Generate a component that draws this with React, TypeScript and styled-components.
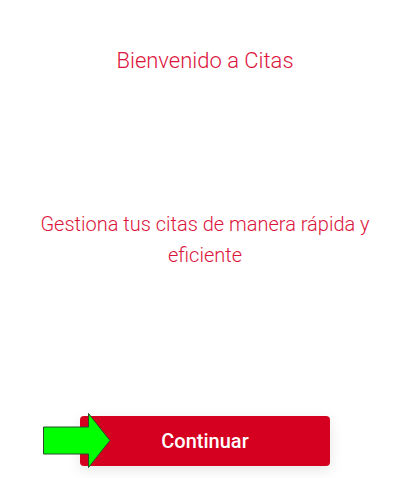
import React from "react";
import styled, { createGlobalStyle } from "styled-components";

const Global = createGlobalStyle`
  html, body { margin: 0; padding: 0; background: #ffffff; }
  body { font-family: Roboto, "Noto Sans", sans-serif; }
`;

const Screen = styled.div`
  box-sizing: border-box;
  height: 478px;
  padding: 47px 0 12px 8px;
  display: flex;
  flex-direction: column;
  align-items: center;
`;

const Title = styled.h1`
  margin: 0;
  font-size: 22px;
  font-weight: 300;
  line-height: 28px;
  color: #dc143c;
  text-align: center;
`;

const Middle = styled.div`
  flex: 1;
  display: flex;
  align-items: center;
  justify-content: center;
  padding-bottom: 12px;
`;

const Subtitle = styled.p`
  margin: 0;
  width: 360px;
  font-size: 20px;
  font-weight: 300;
  line-height: 31px;
  color: #dc143c;
  text-align: center;
`;

const ButtonWrap = styled.div`
  position: relative;
`;

const Button = styled.button`
  width: 250px;
  height: 50px;
  border: none;
  border-radius: 4px;
  background: #d50020;
  color: #ffffff;
  font-family: Roboto, "Noto Sans", sans-serif;
  font-size: 20px;
  font-weight: 500;
  box-shadow: 0 4px 14px rgba(0, 0, 0, 0.1);
  cursor: pointer;
`;

const Arrow = styled.svg`
  position: absolute;
  left: -37px;
  top: -3px;
  overflow: visible;
`;

export default function App() {
  return (
    <>
      <Global />
      <Screen>
        <Title>Bienvenido a Citas</Title>
        <Middle>
          <Subtitle>Gestiona tus citas de manera rápida y eficiente</Subtitle>
        </Middle>
        <ButtonWrap>
          <Button>Continuar</Button>
          <Arrow width="68" height="56" viewBox="0 0 68 56">
            <polygon
              points="0.5,14 45.5,14 45.5,0.5 67,27.5 45.5,54.5 45.5,41 0.5,41"
              fill="#00ff00"
              stroke="#2a4a2a"
              strokeWidth="1"
            />
          </Arrow>
        </ButtonWrap>
      </Screen>
    </>
  );
}
